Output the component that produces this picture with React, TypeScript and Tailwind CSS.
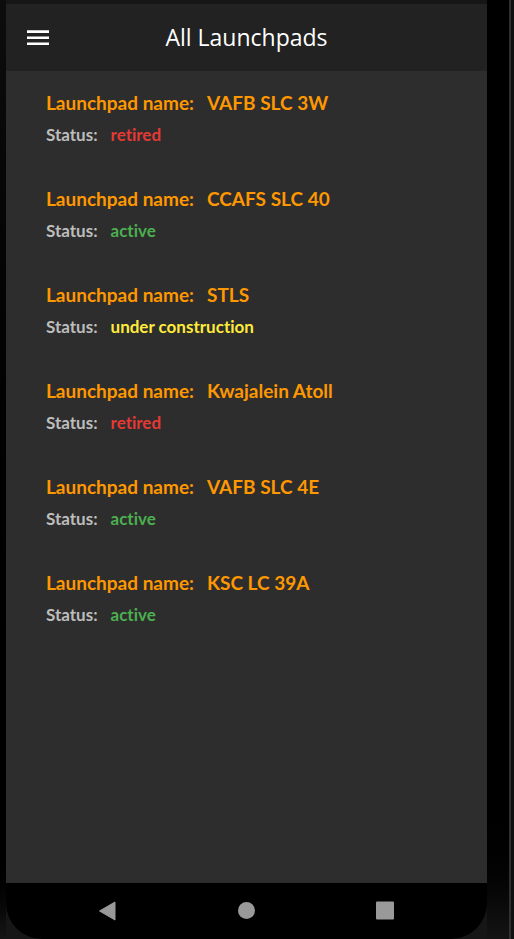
const pads = [
  { name: "VAFB SLC 3W", status: "retired" },
  { name: "CCAFS SLC 40", status: "active" },
  { name: "STLS", status: "under construction" },
  { name: "Kwajalein Atoll", status: "retired" },
  { name: "VAFB SLC 4E", status: "active" },
  { name: "KSC LC 39A", status: "active" },
];

const statusColor: Record<string, string> = {
  retired: "text-[#e53935]",
  active: "text-[#4caf50]",
  "under construction": "text-[#ffeb3b]",
};

export default function App() {
  return (
    <div className="flex min-h-screen bg-black font-['Lato',sans-serif]">
      <div className="w-1.5 shrink-0 bg-linear-to-b from-[#0d0d0d] via-black via-90% to-[#161616]" />
      <div className="flex min-w-0 grow flex-col bg-[#161616] pt-1">
        <header className="flex h-[67px] items-center bg-[#222222] px-5">
          <button aria-label="Open menu" className="flex w-6 shrink-0 justify-center">
            <svg width="24" height="24" viewBox="0 0 24 24" fill="#fff" aria-hidden="true">
              <path d="M1 4.3h22v2.6H1zM1 10.4h22v2.6H1zM1 16.5h22v2.6H1z" />
            </svg>
          </button>
          <h1 className="grow pr-6 text-center font-['Open_Sans',sans-serif] text-[23px] text-white">All Launchpads</h1>
        </header>
        <main className="grow bg-[#2d2d2d] px-10 pt-4">
          <ul>
            {pads.map((p) => (
              <li key={p.name} className="h-24 pt-1 font-bold [font-variant-ligatures:none]">
                <h2 className="flex gap-[13px] text-[19px] leading-6 text-[#ff9800]">
                  <span>Launchpad name:</span>
                  <span>{p.name}</span>
                </h2>
                <p className="mt-2 flex gap-[13px] text-[17px] leading-6 text-[#bdbdbd]">
                  <span>Status:</span>
                  <span className={statusColor[p.status]}>{p.status}</span>
                </p>
              </li>
            ))}
          </ul>
        </main>
        <nav aria-label="System" className="flex h-14 items-center justify-center gap-[119px] rounded-b-[36px] bg-black">
          <button aria-label="Back">
            <svg width="20" height="20" viewBox="0 0 20 20" fill="#999" stroke="#999" strokeLinejoin="round" aria-hidden="true">
              <path d="M17 1v18L1.5 10z" />
            </svg>
          </button>
          <button aria-label="Home">
            <svg width="20" height="20" viewBox="0 0 20 20" fill="#999" aria-hidden="true">
              <circle cx="9.5" cy="9.5" r="8.5" />
            </svg>
          </button>
          <button aria-label="Recent apps">
            <svg width="20" height="20" viewBox="0 0 20 20" fill="#999" aria-hidden="true">
              <rect x="0" y="0.5" width="18" height="18" rx="1" />
            </svg>
          </button>
        </nav>
      </div>
      <div className="flex w-[27px] shrink-0 justify-end bg-linear-to-b from-black from-85% to-[#141414]">
        <div className="w-[5px] border-l-2 border-[#303030] bg-[#101010]" />
      </div>
    </div>
  );
}
